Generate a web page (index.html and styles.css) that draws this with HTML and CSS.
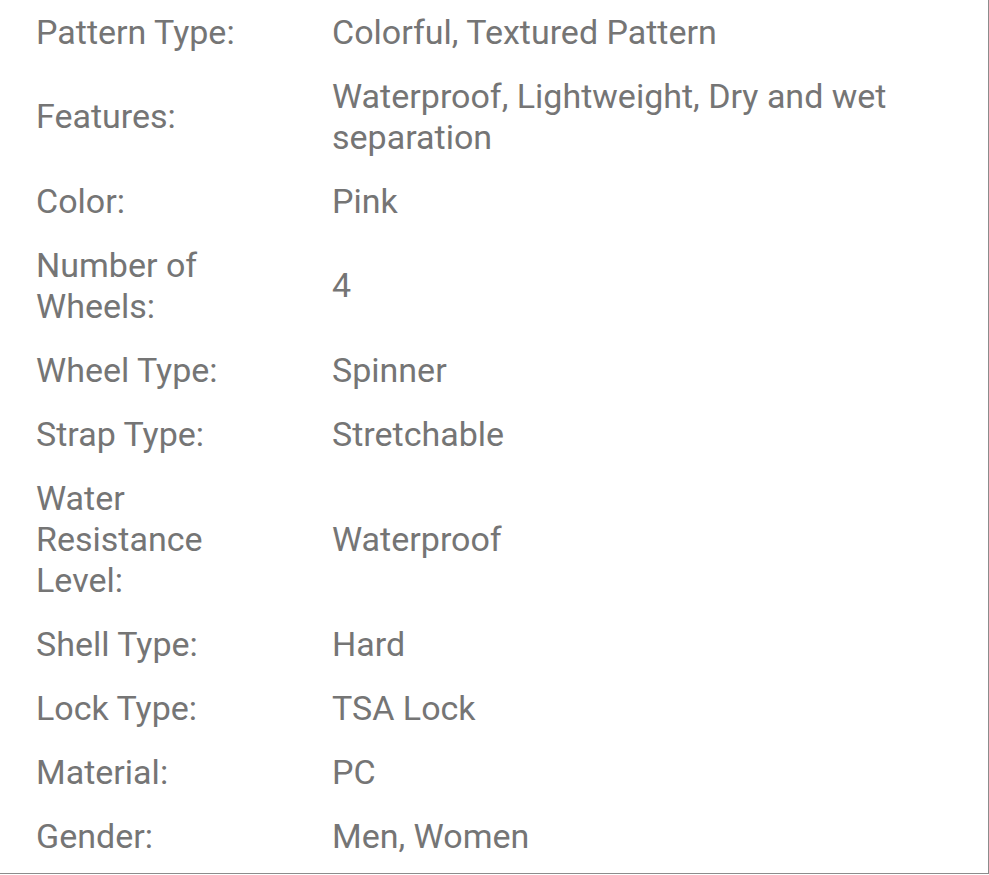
FILE: index.html
```html
<!DOCTYPE html>
<html lang="en">
<head>
<meta charset="utf-8">
<title>Specifications</title>
<link rel="stylesheet" href="styles.css">
</head>
<body>
<div class="specs">
  <dl class="spec-list">
    <dt class="label">Pattern Type:</dt><dd class="value">Colorful, Textured Pattern</dd>
    <dt class="label">Features:</dt><dd class="value">Waterproof, Lightweight, Dry and wet separation</dd>
    <dt class="label">Color:</dt><dd class="value">Pink</dd>
    <dt class="label">Number of Wheels:</dt><dd class="value">4</dd>
    <dt class="label">Wheel Type:</dt><dd class="value">Spinner</dd>
    <dt class="label">Strap Type:</dt><dd class="value">Stretchable</dd>
    <dt class="label">Water Resistance Level:</dt><dd class="value">Waterproof</dd>
    <dt class="label">Shell Type:</dt><dd class="value">Hard</dd>
    <dt class="label">Lock Type:</dt><dd class="value">TSA Lock</dd>
    <dt class="label">Material:</dt><dd class="value">PC</dd>
    <dt class="label">Gender:</dt><dd class="value">Men, Women</dd>
  </dl>
</div>
</body>
</html>
```
FILE: styles.css
```css
html, body {
  margin: 0;
  padding: 0;
  background: #ffffff;
}
body {
  font-family: Roboto, "Liberation Sans", Arial, sans-serif;
  color: #757575;
}
.specs {
  width: 988px;
  border-right: 1px solid #8c8c8c;
  border-bottom: 1px solid #8c8c8c;
  padding-bottom: 5px;
}
.spec-list {
  margin: 0;
  display: grid;
  grid-template-columns: 332px 1fr;
  font-size: 34px;
  line-height: 41px;
}
.label, .value {
  margin: 0;
  padding: 11.5px 0;
  display: flex;
  align-items: center;
}
.label {
  padding-left: 36px;
  padding-right: 36px;
}
.value {
  padding-right: 48px;
}
```
